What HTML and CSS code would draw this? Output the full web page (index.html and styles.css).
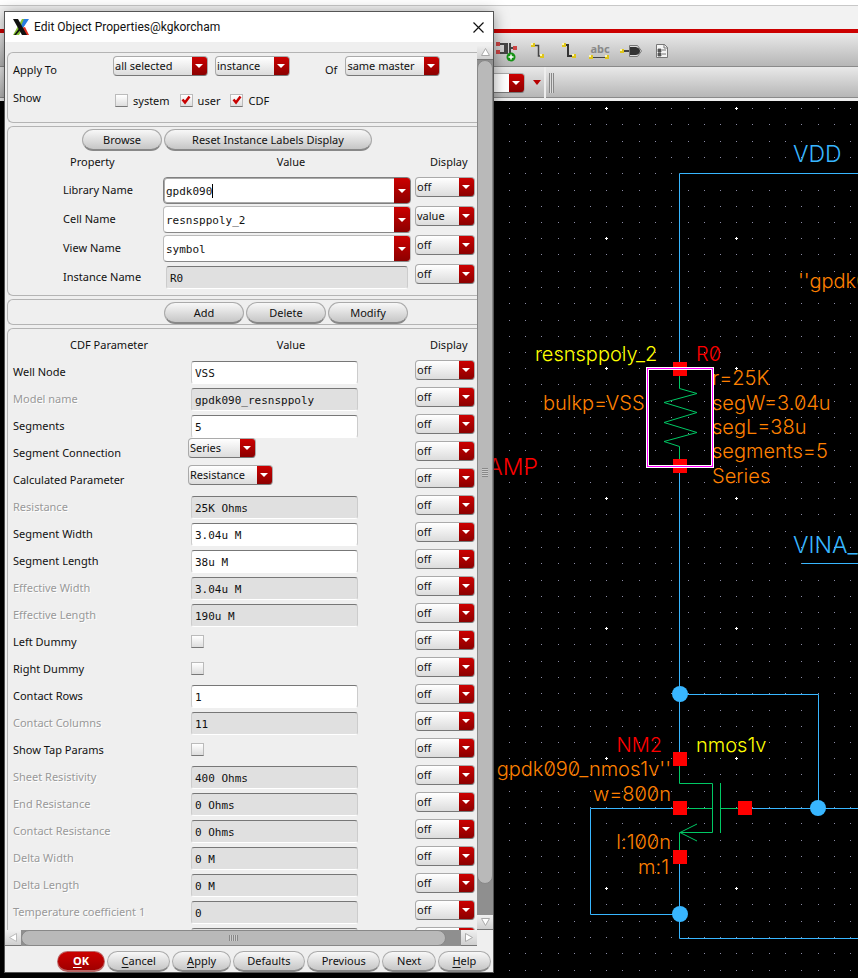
FILE: index.html
```
<!DOCTYPE html>
<html lang="en">
<head>
  <meta charset="UTF-8" />
  <meta name="viewport" content="width=device-width, initial-scale=1.0"/>
  <title>Edit Object Properties</title>
  <link rel="stylesheet" href="styles.css">
</head>
<body>
  <div class="editor">
    <div class="menubar"></div>
    <div class="toolbar">
      <button class="tool" aria-label="Create instance">
        <svg width="22" height="20" viewBox="0 0 22 20">
          <path d="M3 2h6v9H3M11 1v11M14 1v11M14 6h5" fill="none" stroke="#444" stroke-width="2"/>
          <path d="M0 0h4v4H0zM0 8h4v4H0zM17 4h4v4h-4z" fill="#c44"/>
          <circle cx="15" cy="15" r="4.500" fill="#159215"/>
          <path d="M15 12.500v5M12.500 15h5" stroke="#fff" stroke-width="1.500"/>
        </svg>
      </button>
      <button class="tool" aria-label="Create wire">
        <svg width="22" height="20" viewBox="0 0 22 20">
          <path d="M7 3.500h4.500v10.500h3" fill="none" stroke="#444" stroke-width="1.500"/>
          <path d="M4 1h4v4H4zM13 12h4v4h-4z" fill="#dfc51a"/>
          <path d="M4 1h2v2H4zM13 12h2v2h-2z" fill="#fff8b0"/>
        </svg>
      </button>
      <button class="tool" aria-label="Create wide wire">
        <svg width="22" height="20" viewBox="0 0 22 20">
          <path d="M7 3h3v11h4" fill="none" stroke="#333" stroke-width="2"/>
          <path d="M4 1h4v4H4zM14 12h4v4h-4z" fill="#dfc51a"/>
          <path d="M4 1h2v2H4zM14 12h2v2h-2z" fill="#fff8b0"/>
        </svg>
      </button>
      <button class="tool tool-name" aria-label="Wire name">
        <span>abc</span>
        <svg width="20" height="5" viewBox="0 0 20 5">
          <path d="M3 2.500h14" stroke="#444"/>
          <path d="M0 0h4v4H0zM16 0h4v4h-4z" fill="#dfc51a"/>
          <path d="M0 0h2v2H0zM16 0h2v2h-2z" fill="#fff8b0"/>
        </svg>
      </button>
      <button class="tool" aria-label="Create pin">
        <svg width="22" height="20" viewBox="0 0 22 20">
          <path d="M4 9h6" stroke="#444" stroke-width="2"/>
          <path d="M9.500 3.500h8l4 5.500-4 5.500h-8z" fill="#ddd" stroke="#777"/>
          <path d="M10 5h6q4 1 4 4t-4 4h-6z" fill="#333"/>
          <path d="M0 7h4v4H0z" fill="#dfc51a"/>
          <path d="M0 7h2v2H0z" fill="#fff8b0"/>
        </svg>
      </button>
      <button class="tool" aria-label="Properties">
        <svg width="22" height="20" viewBox="0 0 22 20">
          <path d="M5.500 2.500h8l3 3v10h-11z" fill="#f4f4f4" stroke="#777"/>
          <path d="M13 2v4h4" fill="none" stroke="#777"/>
          <path d="M7 7h3v3H7zM7 11h3v3H7zM11 8h4M11 12h4" fill="#555" stroke="#555" stroke-width=".8"/>
        </svg>
      </button>
    </div>
    <div class="toolbar toolbar-second">
      <div class="toolbar-part">
        <select class="select toolbar-select" aria-label="Workspace"><option></option></select>
        <svg width="8" height="5" viewBox="0 0 8 5"><path d="M0 0h8L4 5z" fill="#b80000"/></svg>
      </div>
      <div class="toolbar-part toolbar-rest"><span class="grip"></span></div>
    </div>

    <svg class="schematic">
      <defs>
        <g id="dots">
          <path d="M8 8.500h1M24 8.500h1M41 8.500h1M57 8.500h1M73 8.500h1M90 8.500h1M106 8.500h1M122 8.500h1" stroke="#8c8ca6"/>
        </g>
        <pattern id="grid" x="598" y="100" width="130" height="130" patternUnits="userSpaceOnUse">
          <use href="#dots"/>
          <use href="#dots" y="16"/>
          <use href="#dots" y="33"/>
          <use href="#dots" y="49"/>
          <use href="#dots" y="65"/>
          <use href="#dots" y="82"/>
          <use href="#dots" y="98"/>
          <use href="#dots" y="114"/>
          <path d="M7 8.500h3M8.500 7v3" stroke="#fff"/>
        </pattern>
      </defs>
      <g transform="translate(0 -101)">
        <rect y="101" width="100%" height="100%" fill="url(#grid)"/>

        <!-- nets -->
        <g class="wire">
          <path d="M4000 173.500H679.500V369M679.500 466V759"/>
          <path d="M679.500 694.500H818.500V808.500M745 808.500H4000"/>
          <path d="M680 808.500H590.500V914.500H680M679.500 857V938.500H4000"/>
          <path d="M802 563.500H4000"/>
        </g>

        <!-- resistor R0 -->
        <g class="pin">
          <path d="M673 362h14v14h-14zM673 459h14v14h-14z"/>
        </g>
        <path class="device" d="M679.500 376V388.500L697 393.500L664 402.500L697 412.500L664 422.500L697 432.500L664 441.500L679.500 446.500V459"/>

        <!-- transistor NM2 -->
        <path class="device" d="M679.500 766V783.500H712.500V832.500H679.500V850M687 808.500H712M720.500 783V833M720.500 808.500H738M697 824L680 832.500L697 841"/>
        <g class="pin">
          <path d="M673 752h14v14h-14zM673 801h14v14h-14zM738 801h14v14h-14zM673 850h14v14h-14z"/>
        </g>
        <g class="junction">
          <circle cx="680" cy="694" r="8"/>
          <circle cx="818" cy="808" r="8"/>
          <circle cx="680" cy="914" r="8"/>
        </g>

        <g class="net-label">
          <text x="793" y="162">VDD</text>
          <text x="793" y="553">VINA_</text>
          <text class="red" x="538" y="475" text-anchor="end">AMP</text>
        </g>
        <g class="label">
          <text class="yellow" x="535" y="361">resnsppoly_2</text>
          <text class="red" x="696" y="361">R0</text>
          <text x="543" y="410">bulkp=VSS</text>
          <text x="712" y="385">r=25K</text>
          <text x="712" y="410">segW=3.04u</text>
          <text x="712" y="434">segL=38u</text>
          <text x="712" y="458">segments=5</text>
          <text x="712" y="483">Series</text>
          <text x="798" y="288">''gpdk090</text>
          <text class="red" x="662" y="752" text-anchor="end">NM2</text>
          <text class="yellow" x="696" y="752">nmos1v</text>
          <text x="671" y="776" text-anchor="end">gpdk090_nmos1v''</text>
          <text x="671" y="801" text-anchor="end">w=800n</text>
          <text x="671" y="849" text-anchor="end">l:100n</text>
          <text x="669" y="874" text-anchor="end">m:1</text>
        </g>

        <rect class="selection-edge" x="647.500" y="368.500" width="65" height="98"/>
        <rect class="selection" x="647.500" y="368.500" width="65" height="98"/>
      </g>
    </svg>
  </div>

  <div class="dialog" role="dialog" aria-labelledby="title">
    <div class="titlebar">
      <svg width="16" height="16" viewBox="0 0 16 16">
        <path d="M9 0h6L6 16H0z" fill="#86c232"/>
        <path d="M11 0h5L10 9 8 7z" fill="#2a7de1"/>
        <path d="M9 9l3-1 4 8h-4z" fill="#e02a1c"/>
        <path d="M0 0h5l9 16H9z" fill="#111"/>
        <path d="M8 7l1 2-6 7H1z" fill="#111"/>
      </svg>
      <span class="title" id="title">Edit Object Properties@kgkorcham</span>
      <button class="close" aria-label="Close">
        <svg width="11" height="11" viewBox="0 0 11 11"><path d="M.5.500l10 10M10.500.500l-10 10" stroke="#111" stroke-width="1.200"/></svg>
      </button>
    </div>

    <div class="scroll-area">
      <div class="pane">
        <div class="group apply-group">
          <div class="apply-row">
            <span class="apply-label">Apply To</span>
            <select class="select wide" aria-label="Apply to"><option>all selected</option></select>
            <select class="select medium" aria-label="Object type"><option>instance</option></select>
            <label class="of" for="master">Of</label>
            <select class="select wide" id="master"><option>same master</option></select>
          </div>
          <div class="show-row">
            <span class="apply-label">Show</span>
            <label><input class="check" type="checkbox">system</label>
            <label><input class="check" type="checkbox" checked>user</label>
            <label><input class="check" type="checkbox" checked>CDF</label>
          </div>
        </div>

        <div class="group names">
          <div class="actions browse-actions">
            <button class="button">Browse</button>
            <button class="button reset">Reset Instance Labels Display</button>
          </div>
          <div class="row head"><span>Property</span><span>Value</span><span>Display</span></div>
          <div class="row">
            <label for="lib">Library Name</label>
            <div class="combo active"><input id="lib" value="gpdk090"><span class="caret"></span><button aria-label="Library list"></button></div>
            <select class="select" aria-label="Library Name display"><option>off</option></select>
          </div>
          <div class="row">
            <label for="cell">Cell Name</label>
            <div class="combo"><input id="cell" value="resnsppoly_2"><button aria-label="Cell list"></button></div>
            <select class="select" aria-label="Cell Name display"><option>value</option></select>
          </div>
          <div class="row">
            <label for="view">View Name</label>
            <div class="combo"><input id="view" value="symbol"><button aria-label="View list"></button></div>
            <select class="select" aria-label="View Name display"><option>off</option></select>
          </div>
          <div class="row">
            <label for="inst">Instance Name</label>
            <input class="field" id="inst" value="R0" readonly>
            <select class="select" aria-label="Instance Name display"><option>off</option></select>
          </div>
        </div>

        <div class="group">
          <div class="actions edit-actions">
            <button class="button">Add</button>
            <button class="button">Delete</button>
            <button class="button">Modify</button>
          </div>
        </div>

        <div class="group params">
          <div class="row head"><span>CDF Parameter</span><span>Value</span><span>Display</span></div>
          <div class="row">
            <label for="p1">Well Node</label><input class="field" id="p1" value="VSS">
            <select class="select" aria-label="Well Node display"><option>off</option></select>
          </div>
          <div class="row off">
            <label for="p2">Model name</label><input class="field" id="p2" value="gpdk090_resnsppoly" readonly>
            <select class="select" aria-label="Model name display"><option>off</option></select>
          </div>
          <div class="row">
            <label for="p3">Segments</label><input class="field" id="p3" value="5">
            <select class="select" aria-label="Segments display"><option>off</option></select>
          </div>
          <div class="row">
            <label for="p4">Segment Connection</label>
            <select class="select choice" id="p4"><option>Series</option></select>
            <select class="select" aria-label="Segment Connection display"><option>off</option></select>
          </div>
          <div class="row">
            <label for="p5">Calculated Parameter</label>
            <select class="select choice choice-long" id="p5"><option>Resistance</option></select>
            <select class="select" aria-label="Calculated Parameter display"><option>off</option></select>
          </div>
          <div class="row off">
            <label for="p6">Resistance</label><input class="field" id="p6" value="25K Ohms" readonly>
            <select class="select" aria-label="Resistance display"><option>off</option></select>
          </div>
          <div class="row">
            <label for="p7">Segment Width</label><input class="field" id="p7" value="3.04u M">
            <select class="select" aria-label="Segment Width display"><option>off</option></select>
          </div>
          <div class="row">
            <label for="p8">Segment Length</label><input class="field" id="p8" value="38u M">
            <select class="select" aria-label="Segment Length display"><option>off</option></select>
          </div>
          <div class="row off">
            <label for="p9">Effective Width</label><input class="field" id="p9" value="3.04u M" readonly>
            <select class="select" aria-label="Effective Width display"><option>off</option></select>
          </div>
          <div class="row off">
            <label for="p10">Effective Length</label><input class="field" id="p10" value="190u M" readonly>
            <select class="select" aria-label="Effective Length display"><option>off</option></select>
          </div>
          <div class="row">
            <label for="p11">Left Dummy</label><input class="check" type="checkbox" id="p11">
            <select class="select" aria-label="Left Dummy display"><option>off</option></select>
          </div>
          <div class="row">
            <label for="p12">Right Dummy</label><input class="check" type="checkbox" id="p12">
            <select class="select" aria-label="Right Dummy display"><option>off</option></select>
          </div>
          <div class="row">
            <label for="p13">Contact Rows</label><input class="field" id="p13" value="1">
            <select class="select" aria-label="Contact Rows display"><option>off</option></select>
          </div>
          <div class="row off">
            <label for="p14">Contact Columns</label><input class="field" id="p14" value="11" readonly>
            <select class="select" aria-label="Contact Columns display"><option>off</option></select>
          </div>
          <div class="row">
            <label for="p15">Show Tap Params</label><input class="check" type="checkbox" id="p15">
            <select class="select" aria-label="Show Tap Params display"><option>off</option></select>
          </div>
          <div class="row off">
            <label for="p16">Sheet Resistivity</label><input class="field" id="p16" value="400 Ohms" readonly>
            <select class="select" aria-label="Sheet Resistivity display"><option>off</option></select>
          </div>
          <div class="row off">
            <label for="p17">End Resistance</label><input class="field" id="p17" value="0 Ohms" readonly>
            <select class="select" aria-label="End Resistance display"><option>off</option></select>
          </div>
          <div class="row off">
            <label for="p18">Contact Resistance</label><input class="field" id="p18" value="0 Ohms" readonly>
            <select class="select" aria-label="Contact Resistance display"><option>off</option></select>
          </div>
          <div class="row off">
            <label for="p19">Delta Width</label><input class="field" id="p19" value="0 M" readonly>
            <select class="select" aria-label="Delta Width display"><option>off</option></select>
          </div>
          <div class="row off">
            <label for="p20">Delta Length</label><input class="field" id="p20" value="0 M" readonly>
            <select class="select" aria-label="Delta Length display"><option>off</option></select>
          </div>
          <div class="row off">
            <label for="p21">Temperature coefficient 1</label><input class="field" id="p21" value="0" readonly>
            <select class="select" aria-label="Temperature coefficient 1 display"><option>off</option></select>
          </div>
          <div class="row off">
            <label for="p22"></label><input class="field" id="p22" readonly>
            <select class="select" aria-label="Display"><option></option></select>
          </div>
        </div>
      </div>

      <div class="vbar">
        <button class="arrow" aria-label="Scroll up"><svg width="9" height="8" viewBox="0 0 9 8"><path d="M4.500.500L8.500 7.500H.5z" fill="#fff" stroke="#aaa"/></svg></button>
        <div class="thumb"><span></span></div>
        <button class="arrow" aria-label="Scroll down"><svg width="9" height="8" viewBox="0 0 9 8"><path d="M.5.500h8L4.500 7.500z" fill="#fff" stroke="#aaa"/></svg></button>
      </div>
      <div class="hbar">
        <button class="arrow" aria-label="Scroll left"><svg width="8" height="9" viewBox="0 0 8 9"><path d="M7.500.500v8L.5 4.500z" fill="#fff" stroke="#bbb"/></svg></button>
        <div class="thumb"><span></span></div>
        <button class="arrow" aria-label="Scroll right"><svg width="8" height="9" viewBox="0 0 8 9"><path d="M.5.500v8L7.500 4.500z" fill="#fff" stroke="#aaa"/></svg></button>
      </div>
    </div>

    <div class="footer">
      <button class="button primary"><u>O</u>K</button>
      <button class="button"><u>C</u>ancel</button>
      <button class="button"><u>A</u>pply</button>
      <button class="button">Defaults</button>
      <button class="button">Previous</button>
      <button class="button">Next</button>
      <button class="button"><u>H</u>elp</button>
    </div>
  </div>
</body>
</html>
```
FILE: styles.css
```
:root {
  --panel: #efefef;
  --line: #b4b4b4;
  --red: linear-gradient(#cc0000, #8c0000);
  --arrow: url("data:image/svg+xml,%3Csvg xmlns='http://www.w3.org/2000/svg' width='8' height='4'%3E%3Cpath d='M0 0h8L4 4z' fill='%23fff'/%3E%3C/svg%3E");
  --tick: url("data:image/svg+xml,%3Csvg xmlns='http://www.w3.org/2000/svg' width='10' height='10'%3E%3Cpath d='M1.500 4.500l2.500 3 4.500-6' fill='none' stroke='%23c80000' stroke-width='2.500'/%3E%3C/svg%3E");
}

* {
  box-sizing: border-box;
}

body {
  margin: 0;
  height: 100vh;
  position: relative;
  overflow: hidden;
  font-family: "Noto Sans", sans-serif;
  font-size: 11px;
  color: #111;
  background: #000;
}

button,
input,
select {
  margin: 0;
  font: inherit;
  color: inherit;
}

/* schematic editor */
.editor {
  display: flex;
  flex-direction: column;
  height: 100%;
}

.menubar {
  height: 33px;
  border-top: 5px solid #fff;
  border-bottom: 4px solid #cc0000;
  background: #f2f2f2;
  box-shadow: inset 0 1px #c8c8c8;
}

.toolbar {
  display: flex;
  align-items: center;
  height: 34px;
  padding: 4px 0 0 496px;
  gap: 9px;
  background: linear-gradient(#e9e9e9, #b6b6b6);
  border-bottom: 1px solid #8a8a8a;
}

.tool {
  width: 22px;
  height: 20px;
  padding: 0;
  border: none;
  background: none;
}

.tool svg {
  display: block;
}

.tool-name {
  color: #888;
  font-weight: bold;
  line-height: 12px;
}

.tool-name span {
  display: block;
}

.toolbar-second {
  padding: 0;
  gap: 2px;
  align-items: stretch;
  background: #eee;
  border-bottom: 3px solid #eee;
}

.toolbar-part {
  display: flex;
  align-items: center;
  gap: 8px;
  width: 544px;
  padding: 1px 0 0 405px;
  background: linear-gradient(#e9e9e9, #b6b6b6);
  border-bottom: 1px solid #8a8a8a;
}

.toolbar-rest {
  flex: 1;
  padding-left: 3px;
}

.grip {
  width: 5px;
  height: 20px;
  background: repeating-linear-gradient(90deg, #888 0 1px, #ddd 1px 2px);
}

.schematic {
  flex: 1;
  min-height: 0;
  width: 100%;
  background: #000;
}

.wire {
  fill: none;
  stroke: #38b6ff;
}

.device {
  fill: none;
  stroke: #00c864;
}

.pin {
  fill: #ff0000;
}

.junction {
  fill: #38b6ff;
}

.selection-edge {
  fill: none;
  stroke: #fff;
  stroke-width: 3px;
}

.selection {
  fill: none;
  stroke: #ff00ff;
}

.label,
.net-label {
  font-family: Inter, sans-serif;
  font-size: 20px;
  font-weight: 300;
  font-feature-settings: "zero";
  fill: #ff8000;
}

.net-label {
  font-size: 23px;
  fill: #38b6ff;
}

.red {
  fill: #ff0000;
}

.yellow {
  fill: #ffff00;
}

/* dialog */
.dialog {
  position: absolute;
  left: 4px;
  top: 11px;
  bottom: 5px;
  width: 490px;
  display: flex;
  flex-direction: column;
  border: 1px solid #555;
  background: var(--panel);
  box-shadow: 0 2px 14px rgba(0, 0, 0, 0.4);
}

.titlebar {
  display: flex;
  align-items: center;
  gap: 5px;
  height: 30px;
  padding: 0 9px 0 8px;
  background: #fff;
}

.title {
  flex: 1;
  font-family: Roboto, sans-serif;
  font-size: 12px;
}

.close {
  padding: 0;
  border: none;
  background: none;
  line-height: 0;
}

.scroll-area {
  flex: 1;
  min-height: 0;
  display: grid;
  grid-template-columns: 1fr 16px;
  grid-template-rows: minmax(0, 1fr) 16px;
}

.pane {
  display: flex;
  flex-direction: column;
  gap: 3px;
  padding: 10px 0 0 2px;
  overflow: hidden;
}

.group {
  flex: none;
  border: 1px solid var(--line);
  border-right: none;
  border-radius: 6px 0 0 6px;
}

.apply-group {
  padding: 3px 0 12px 5px;
}

.apply-row {
  display: flex;
  align-items: flex-start;
  gap: 7px;
  height: 22px;
  margin-bottom: 12px;
}

.apply-label {
  width: 93px;
  line-height: 15px;
}

.apply-row .apply-label,
.of {
  align-self: flex-end;
  line-height: 16px;
}

.of {
  margin: 0 1px 0 28px;
}

.show-row {
  display: flex;
  gap: 10px;
}

.show-row label {
  display: flex;
  align-items: center;
  gap: 5px;
  height: 20px;
}

.show-row .apply-label {
  width: 92px;
}

.select {
  appearance: none;
  width: 60px;
  height: 20px;
  padding: 0 18px 0 1px;
  border: 1px solid #aaa;
  border-bottom-color: #777;
  border-radius: 4px;
  line-height: 16px;
  background:
    var(--arrow) right 4px center no-repeat,
    var(--red) right / 15px 100% no-repeat,
    linear-gradient(#fff, #dcdcdc);
}

.select.wide {
  width: 95px;
}

.select.medium {
  width: 75px;
}

.toolbar .toolbar-select {
  width: 120px;
  background:
    var(--arrow) right 4px center no-repeat,
    var(--red) right / 15px 100% no-repeat,
    #fff;
}

.check {
  appearance: none;
  width: 13px;
  height: 13px;
  border: 1px solid #bbb;
  border-bottom-color: #777;
  background: linear-gradient(#fff, #ddd);
}

.check:checked {
  background: var(--tick) center no-repeat, linear-gradient(#fff, #ddd);
}

.button {
  min-width: 80px;
  height: 22px;
  padding: 0 11px;
  border: 1px solid #aaa;
  border-bottom: 2px solid #888;
  border-radius: 11px;
  line-height: 18px;
  white-space: nowrap;
  background: linear-gradient(#f8f8f8, #c6c6c6);
}

.actions {
  display: flex;
  gap: 2px;
}

.browse-actions {
  padding: 2px 0 0 74px;
}

.edit-actions {
  padding: 2px 0 0 156px;
}

.reset {
  width: 208px;
}

.row {
  display: grid;
  grid-template-columns: 155px 1fr 62px;
  height: 29px;
  align-items: start;
}

.row label {
  padding-left: 55px;
  line-height: 28px;
}

.row .select {
  margin-top: 1px;
}

.row.head {
  height: 25px;
  line-height: 22px;
}

.row.head span:first-child {
  padding-left: 62px;
}

.row.head span:nth-child(2) {
  padding-left: 4px;
  text-align: center;
}

.row.head span:last-child {
  padding-left: 15px;
}

.names {
  padding-bottom: 3px;
}

.combo {
  display: flex;
  position: relative;
  width: 248px;
  height: 27px;
  margin-top: 1px;
  border: 1px solid #bbb;
  border-bottom-color: #888;
  border-radius: 4px;
  overflow: hidden;
  background: #fff;
  font-family: "DejaVu Sans Mono", monospace;
}

.combo.active {
  border-color: #808080;
  box-shadow: inset 0 0 0 1px #aaa;
}

.combo input {
  flex: 1;
  min-width: 0;
  padding: 2px 2px 0;
  border: none;
  outline: none;
  background: none;
}

.combo button {
  width: 16px;
  border: none;
  background: var(--arrow) center no-repeat, var(--red);
}

.caret {
  position: absolute;
  left: calc(2px + 7ch);
  top: 6px;
  width: 1px;
  height: 14px;
  background: #000;
}

.field {
  width: 242px;
  height: 23px;
  margin: 3px 0 0 3px;
  padding: 1px 3px 0;
  border: 1px solid #ccc;
  border-top: 1px solid #777;
  border-bottom-color: #fff;
  border-radius: 3px;
  outline: none;
  background: #fff;
  font-family: "DejaVu Sans Mono", monospace;
}

.field:read-only {
  background: #e0e0e0;
}

.params {
  padding-top: 5px;
}

.params .row {
  grid-template-columns: 180px 1fr 62px;
  height: 27px;
}

.params .row.head {
  grid-template-columns: 155px 1fr 62px;
  height: 25px;
}

.params .row label {
  padding-left: 5px;
  line-height: 26px;
}

.params .field {
  width: 167px;
  margin-top: 2px;
}

.params .check {
  margin: 6px 0 0 3px;
}

.params .choice {
  width: 68px;
  margin-top: -2px;
}

.params .choice-long {
  width: 85px;
}

.off label {
  color: #999;
  text-shadow: 1px 1px #fff;
}

/* scrollbars */
.vbar,
.hbar {
  display: flex;
  background: #8f8f8f;
}

.vbar {
  flex-direction: column;
  margin-top: 3px;
}

.arrow {
  display: flex;
  align-items: center;
  justify-content: center;
  width: 16px;
  height: 15px;
  padding: 0;
  border: none;
  border-bottom: 1px solid #777;
  background: linear-gradient(#f0f0f0, #cfcfcf);
}

.hbar .arrow {
  height: 16px;
}

.thumb {
  flex: 1;
  display: flex;
  align-items: center;
  justify-content: center;
  border: 1px solid #888;
  border-radius: 8px;
  background: #b9b9b9;
}

.vbar .thumb {
  margin-bottom: 31px;
}

.hbar .thumb {
  margin-right: 15px;
}

.hbar .thumb span {
  width: 9px;
  height: 6px;
  background: repeating-linear-gradient(90deg, #888 0 1px, #ccc 1px 2px);
}

.vbar .thumb span {
  width: 6px;
  height: 9px;
  background: repeating-linear-gradient(#888 0 1px, #ccc 1px 2px);
}

.footer {
  display: flex;
  align-items: center;
  gap: 2px;
  height: 26px;
  padding: 4px 2px 0 52px;
}

.footer .button {
  flex: 1 0 auto;
  min-width: 48px;
  height: 21px;
  line-height: 17px;
}

.footer .primary {
  color: #fff;
  font-weight: bold;
  border-color: #b66;
  background: linear-gradient(#cc0000, #a00000);
}

.footer u {
  text-underline-offset: 2px;
}
```
